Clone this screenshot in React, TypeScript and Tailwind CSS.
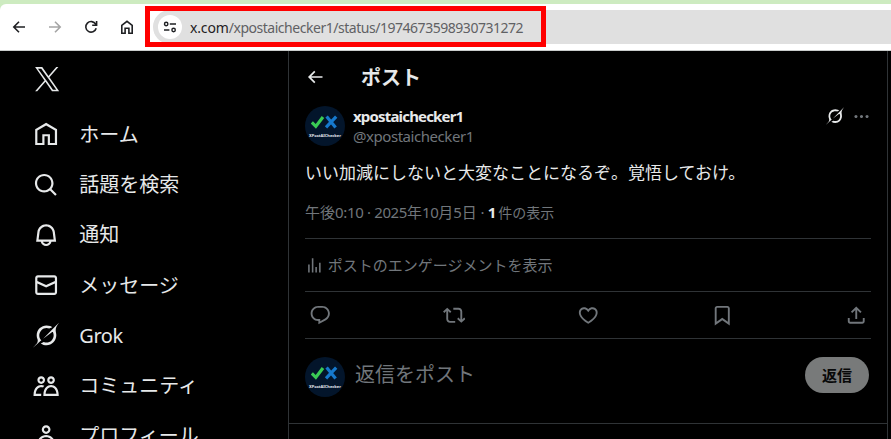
import React from "react";

const paths = {
  x: "M14.095 10.316L22.286 1h-1.94l-7.116 8.088L7.551 1H1l8.589 12.231L1 23h1.941l7.509-8.543L16.449 23H23l-8.905-12.684zM11.437 13.338l-.872-1.218L3.641 2.432h2.981l5.59 7.821.868 1.219 7.265 10.166h-2.982l-5.926-8.3z",
  search:
    "M10.25 3.75c-3.59 0-6.5 2.91-6.5 6.5s2.91 6.5 6.5 6.5c1.795 0 3.419-.726 4.596-1.904 1.178-1.177 1.904-2.801 1.904-4.596 0-3.59-2.91-6.5-6.5-6.5zm-8.5 6.5c0-4.694 3.806-8.5 8.5-8.5s8.5 3.806 8.5 8.5c0 1.986-.682 3.815-1.824 5.262l4.781 4.781-1.414 1.414-4.781-4.781c-1.447 1.142-3.276 1.824-5.262 1.824-4.694 0-8.5-3.806-8.5-8.5z",
  home: "M12 1.7L2 7.5V22h8.5v-8h3v8H22V7.5L12 1.7zM20 20h-4.5v-8h-7v8H4V8.65l8-4.64 8 4.64V20z",
  bell: "M19.993 9.042C19.48 5.017 16.054 2 11.996 2s-7.49 3.021-7.999 7.051L2.866 18H7.1c.463 2.282 2.481 4 4.9 4s4.437-1.718 4.9-4h4.236l-1.143-8.958zM12 20c-1.306 0-2.417-.835-2.829-2h5.658c-.412 1.165-1.523 2-2.829 2zm-6.866-4l.847-6.698C6.364 6.272 8.941 4 11.996 4s5.627 2.268 6.013 5.295L18.864 16H5.134z",
  mail: "M1.998 5.5c0-1.381 1.119-2.5 2.5-2.5h15c1.381 0 2.5 1.119 2.5 2.5v13c0 1.381-1.119 2.5-2.5 2.5h-15c-1.381 0-2.5-1.119-2.5-2.5v-13zm2.5-.5c-.276 0-.5.224-.5.5v2.764l8 3.638 8-3.636V5.5c0-.276-.224-.5-.5-.5h-15zm15.5 5.463l-8 3.636-8-3.638V18.5c0 .276.224.5.5.5h15c.276 0 .5-.224.5-.5v-8.037z",
  communities:
    "M7.501 19.917L7.471 21H.472l.029-1.027c.184-6.618 3.736-8.977 7-8.977.963 0 1.95.212 2.87.672-.444.478-.851 1.03-1.212 1.656-.507-.204-1.054-.329-1.658-.329-2.767 0-4.57 2.223-4.938 6.004H7.56c-.023.302-.05.599-.059.918zm15.998.056L23.528 21H9.472l.029-1.027c.184-6.618 3.736-8.977 7-8.977s6.816 2.358 7 8.977zM21.437 19c-.367-3.781-2.17-6.004-4.938-6.004s-4.57 2.223-4.938 6.004h9.875zm-4.938-9c-.799 0-1.527-.279-2.116-.73-.836-.64-1.384-1.638-1.384-2.77 0-1.93 1.567-3.5 3.5-3.5s3.5 1.57 3.5 3.5c0 1.132-.548 2.13-1.384 2.77-.589.451-1.317.73-2.116.73zm-1.5-3.5c0 .827.673 1.5 1.5 1.5s1.5-.673 1.5-1.5-.673-1.5-1.5-1.5-1.5.673-1.5 1.5zM7.5 3C9.433 3 11 4.57 11 6.5S9.433 10 7.5 10 4 8.43 4 6.5 5.567 3 7.5 3zm0 2C6.673 5 6 5.673 6 6.5S6.673 8 7.5 8 9 7.327 9 6.5 8.327 5 7.5 5z",
  profile:
    "M5.651 19h12.698c-.337-1.8-1.023-3.21-1.945-4.19C15.318 13.65 13.838 13 12 13s-3.317.65-4.404 1.81c-.922.98-1.608 2.39-1.945 4.19zm.486-5.56C7.627 11.85 9.648 11 12 11s4.373.85 5.863 2.44c1.477 1.58 2.366 3.8 2.632 6.46l.11 1.1H3.395l.11-1.1c.266-2.66 1.155-4.88 2.632-6.46zM12 4c-1.105 0-2 .9-2 2s.895 2 2 2 2-.9 2-2-.895-2-2-2zM8 6c0-2.21 1.791-4 4-4s4 1.79 4 4-1.791 4-4 4-4-1.79-4-4z",
  grok: "M12.745 20.54l10.97-8.19c.539-.4 1.307-.244 1.564.38 1.349 3.288.746 7.241-1.938 9.955-2.683 2.714-6.417 3.31-9.83 1.954l-3.728 1.745c5.347 3.697 11.84 2.782 15.898-1.324 3.219-3.255 4.216-7.692 3.284-11.693l.008.009c-1.351-5.878.332-8.227 3.782-13.031L33 0l-4.54 4.59v-.014L12.743 20.544m-2.263 1.987c-3.837-3.707-3.175-9.446.1-12.755 2.42-2.449 6.388-3.448 9.852-1.979l3.72-1.737c-.67-.49-1.53-1.017-2.515-1.387-4.455-1.854-9.789-.931-13.41 2.728-3.483 3.523-4.579 8.94-2.697 13.561 1.405 3.454-.899 5.898-3.22 8.364C1.49 30.2.666 31.074 0 32l10.478-9.466",
  reply:
    "M1.751 10c0-4.42 3.584-8 8.005-8h4.366c4.49 0 8.129 3.64 8.129 8.13 0 2.96-1.607 5.68-4.196 7.11l-8.054 4.46v-3.69h-.067c-4.49.1-8.183-3.51-8.183-8.01zm8.005-6c-3.317 0-6.005 2.69-6.005 6 0 3.37 2.77 6.08 6.138 6.01l.351-.01h1.761v2.3l5.087-2.81c1.951-1.08 3.163-3.13 3.163-5.36 0-3.39-2.744-6.13-6.129-6.13H9.756z",
  repost:
    "M4.5 3.88l4.432 4.14-1.364 1.46L5.5 7.55V16c0 1.1.896 2 2 2H13v2H7.5c-2.209 0-4-1.79-4-4V7.55L1.432 9.48.068 8.02 4.5 3.88zM16.5 6H11V4h5.5c2.209 0 4 1.79 4 4v8.45l2.068-1.93 1.364 1.46-4.432 4.14-4.432-4.14 1.364-1.46 2.068 1.93V8c0-1.1-.896-2-2-2z",
  heart:
    "M16.697 5.5c-1.222-.06-2.679.51-3.89 2.16l-.805 1.09-.806-1.09C9.984 6.01 8.526 5.44 7.304 5.5c-1.243.07-2.349.78-2.91 1.91-.552 1.12-.633 2.78.479 4.82 1.074 1.97 3.257 4.27 7.129 6.61 3.87-2.34 6.052-4.64 7.126-6.61 1.111-2.04 1.03-3.7.477-4.82-.561-1.13-1.666-1.84-2.908-1.91zm4.187 7.69c-1.351 2.48-4.001 5.12-8.379 7.67l-.503.3-.504-.3c-4.379-2.55-7.029-5.19-8.382-7.67-1.36-2.5-1.41-4.86-.514-6.67.887-1.79 2.647-2.91 4.601-3.01 1.651-.09 3.368.56 4.798 2.01 1.429-1.45 3.146-2.1 4.796-2.01 1.954.1 3.714 1.22 4.601 3.01.896 1.81.846 4.17-.514 6.67z",
  bookmark:
    "M4 4.5C4 3.12 5.119 2 6.5 2h11C18.881 2 20 3.12 20 4.5v18.44l-8-5.71-8 5.71V4.5zM6.5 4c-.276 0-.5.22-.5.5v14.56l6-4.29 6 4.29V4.5c0-.28-.224-.5-.5-.5h-11z",
  share:
    "M12 2.59l5.7 5.7-1.41 1.42L13 6.41V16h-2V6.41l-3.3 3.3-1.41-1.42L12 2.59zM21 15l-.02 3.51c0 1.38-1.12 2.49-2.5 2.49H5.5C4.11 21 3 19.88 3 18.5V15h2v3.5c0 .28.22.5.5.5h12.98c.28 0 .5-.22.5-.5L19 15h2z",
  more: "M3 12c0-1.1.9-2 2-2s2 .9 2 2-.9 2-2 2-2-.9-2-2zm9 2c1.1 0 2-.9 2-2s-.9-2-2-2-2 .9-2 2 .9 2 2 2zm7 0c1.1 0 2-.9 2-2s-.9-2-2-2-2 .9-2 2 .9 2 2 2z",
  analytics:
    "M8.75 21V3h2v18h-2zM18 21V8.5h2V21h-2zM4 21l.004-10h2L6 21H4zm9.248 0v-7h2v7h-2z",
  back: "M7.414 13l5.043 5.04-1.414 1.42L3.586 12l7.457-7.46 1.414 1.42L7.414 11H21v2H7.414z",
};

type IconName = keyof typeof paths;

function Icon({ name, className }: { name: IconName; className: string }) {
  return (
    <svg
      viewBox={name === "grok" ? "0 0 33 32" : "0 0 24 24"}
      className={`shrink-0 fill-current ${className}`}
      aria-hidden="true"
    >
      <path d={paths[name]} />
    </svg>
  );
}

function ChromeIcon({ children, className = "" }: { children: React.ReactNode; className?: string }) {
  return (
    <svg
      viewBox="0 0 16 16"
      className={`size-4 shrink-0 fill-none stroke-current stroke-[1.6] ${className}`}
      aria-hidden="true"
    >
      {children}
    </svg>
  );
}

function Toolbar() {
  return (
    <div className="h-[51px] bg-[#cdebc0] pt-1">
      <div className="flex h-[47px] items-center rounded-tl-md border-b border-[#c9cccb] bg-white pl-[11px] text-[#1f2023]">
        <div className="flex shrink-0 gap-5">
          <ChromeIcon>
            <path d="M14 8H2.8M8 2.8L2.8 8L8 13.2" />
          </ChromeIcon>
          <ChromeIcon className="text-[#a5a5a5]">
            <path d="M2 8h11.2M8 2.8L13.2 8L8 13.2" />
          </ChromeIcon>
          <ChromeIcon>
            <path d="M12.7 5.2A5.3 5.3 0 1 0 13.2 9.3M13.6 2v4.3H9.2" />
          </ChromeIcon>
          <ChromeIcon>
            <path d="M2.8 6.3L8 2.3l5.2 4v7.9H9.9V9.3H6.1v4.9H2.8z" />
          </ChromeIcon>
        </div>
        <div className="relative ml-[18px] flex h-[34px] flex-1 items-center rounded-l-full bg-[#e0e0e0] pl-[5px]">
          <div className="flex size-6 items-center justify-center rounded-full bg-white">
            <svg viewBox="0 0 14 14" className="size-3.5 fill-none stroke-current stroke-[1.4]">
              <circle cx="3.2" cy="4" r="1.7" />
              <path d="M6.8 4H13M1 10h5.4" />
              <circle cx="10.6" cy="10" r="1.7" />
            </svg>
          </div>
          <p className="ml-2 font-['Noto_Sans',sans-serif] text-[14px] tracking-[-0.47px] whitespace-nowrap text-[#606164]">
            <span className="tracking-[-0.15px] text-[#1f2023]">x.com</span>/xpostaichecker1/status/1974673598930731272
          </p>
          <div className="absolute -top-1 -left-2 h-[41px] w-[401px] border-5 border-[#ff0000]" />
        </div>
      </div>
    </div>
  );
}

const nav: { icon: IconName; label: string }[] = [
  { icon: "home", label: "ホーム" },
  { icon: "search", label: "話題を検索" },
  { icon: "bell", label: "通知" },
  { icon: "mail", label: "メッセージ" },
  { icon: "grok", label: "Grok" },
  { icon: "communities", label: "コミュニティ" },
  { icon: "profile", label: "プロフィール" },
];

function Sidebar() {
  return (
    <nav className="w-[289px] shrink-0 border-r border-[#2f3336] pl-[33px]">
      <div className="flex h-[58.25px] items-start pt-[15px]">
        <Icon name="x" className="ml-px size-[26.25px]" />
      </div>
      {nav.map((item) => (
        <div key={item.label} className="flex h-[50.25px] items-center gap-5">
          <Icon name={item.icon} className="size-[26.25px]" />
          <span className={`pt-px text-xl leading-6 ${item.icon === "grok" ? "tracking-[-0.4px]" : ""}`}>
            {item.label}
          </span>
        </div>
      ))}
    </nav>
  );
}

function Avatar() {
  return (
    <div className="flex size-10 shrink-0 flex-col items-center rounded-full bg-[#03152b] pt-[9px]">
      <svg viewBox="0 0 28 14" className="h-3.5 w-7 shrink-0 fill-none stroke-[3.2]">
        <path d="M0.8 7.4l4 4L12 2" stroke="#3acb54" />
        <path d="M15.6 1.6l9 10.8M25.2 1.6L15 12.4" stroke="#1679cd" />
      </svg>
      <span className="mt-1 font-['Noto_Sans',sans-serif] text-[4px] leading-[5px] font-bold whitespace-nowrap text-[#e3e8ee]">
        XPostAIChecker
      </span>
    </div>
  );
}

const actions: IconName[] = ["reply", "repost", "heart", "bookmark", "share"];

function Post() {
  return (
    <main className="w-[599px] shrink-0 border-r border-[#2f3336]">
      <header className="flex h-[53px] items-center pl-4">
        <Icon name="back" className="mb-0.5 size-5" />
        <h1 className="ml-9 text-xl leading-6 font-bold">ポスト</h1>
      </header>
      <article className="px-4 pt-0.5">
        <div className="flex gap-2">
          <Avatar />
          <div className="flex-1 text-[15px] leading-5">
            <p className="font-bold tracking-[-0.83px]">xpostaichecker1</p>
            <p className="tracking-[-0.45px] text-[#71767b]">@xpostaichecker1</p>
          </div>
          <div className="flex h-5 items-center gap-2">
            <Icon name="grok" className="size-[18px]" />
            <Icon name="more" className="size-[19px] text-[#71767b]" />
          </div>
        </div>
        <p className="mt-[15px] text-[17px] leading-6">いい加減にしないと大変なことになるぞ。覚悟しておけ。</p>
        <p className="mt-[17px] text-[15px] leading-5 text-[#71767b]">
          午後<span className="tracking-[-0.35px]">0:10 · 2025</span>年
          <span className="tracking-[-0.5px]">10</span>月5日
          <span className="tracking-[-0.3px]"> · </span>
          <span className="font-bold tracking-[-1px] text-[#e7e9ea]">1 </span>
          <span className="text-[14px]">件の表示</span>
        </p>
        <div className="mt-[15px] flex h-[53px] items-center gap-1 border-t border-[#2f3336] text-[#71767b]">
          <Icon name="analytics" className="size-[18.75px]" />
          <span className="text-[15px] leading-5">ポストのエンゲージメントを表示</span>
        </div>
        <div className="flex h-12 items-center justify-between border-y border-[#2f3336] pr-1 pl-1 text-[#71767b]">
          {actions.map((name) => (
            <Icon key={name} name={name} className="size-[22.5px]" />
          ))}
        </div>
      </article>
      <div className="flex h-[85px] gap-2.5 border-b border-[#2f3336] pt-[18px] pr-[18px] pl-4">
        <Avatar />
        <p className="mt-1.5 flex-1 text-xl leading-6 text-[#71767b]">返信をポスト</p>
        <button className="h-9 w-16 rounded-full bg-[#787a7a] text-[15px] leading-5 font-bold text-[#080909]">
          返信
        </button>
      </div>
    </main>
  );
}

export default function App() {
  return (
    <div className="flex h-[439px] w-[891px] flex-col overflow-hidden bg-black font-['Noto_Sans','Noto_Sans_CJK_JP',sans-serif] text-[#e7e9ea]">
      <Toolbar />
      <div className="flex min-h-0 flex-1">
        <Sidebar />
        <Post />
      </div>
    </div>
  );
}
